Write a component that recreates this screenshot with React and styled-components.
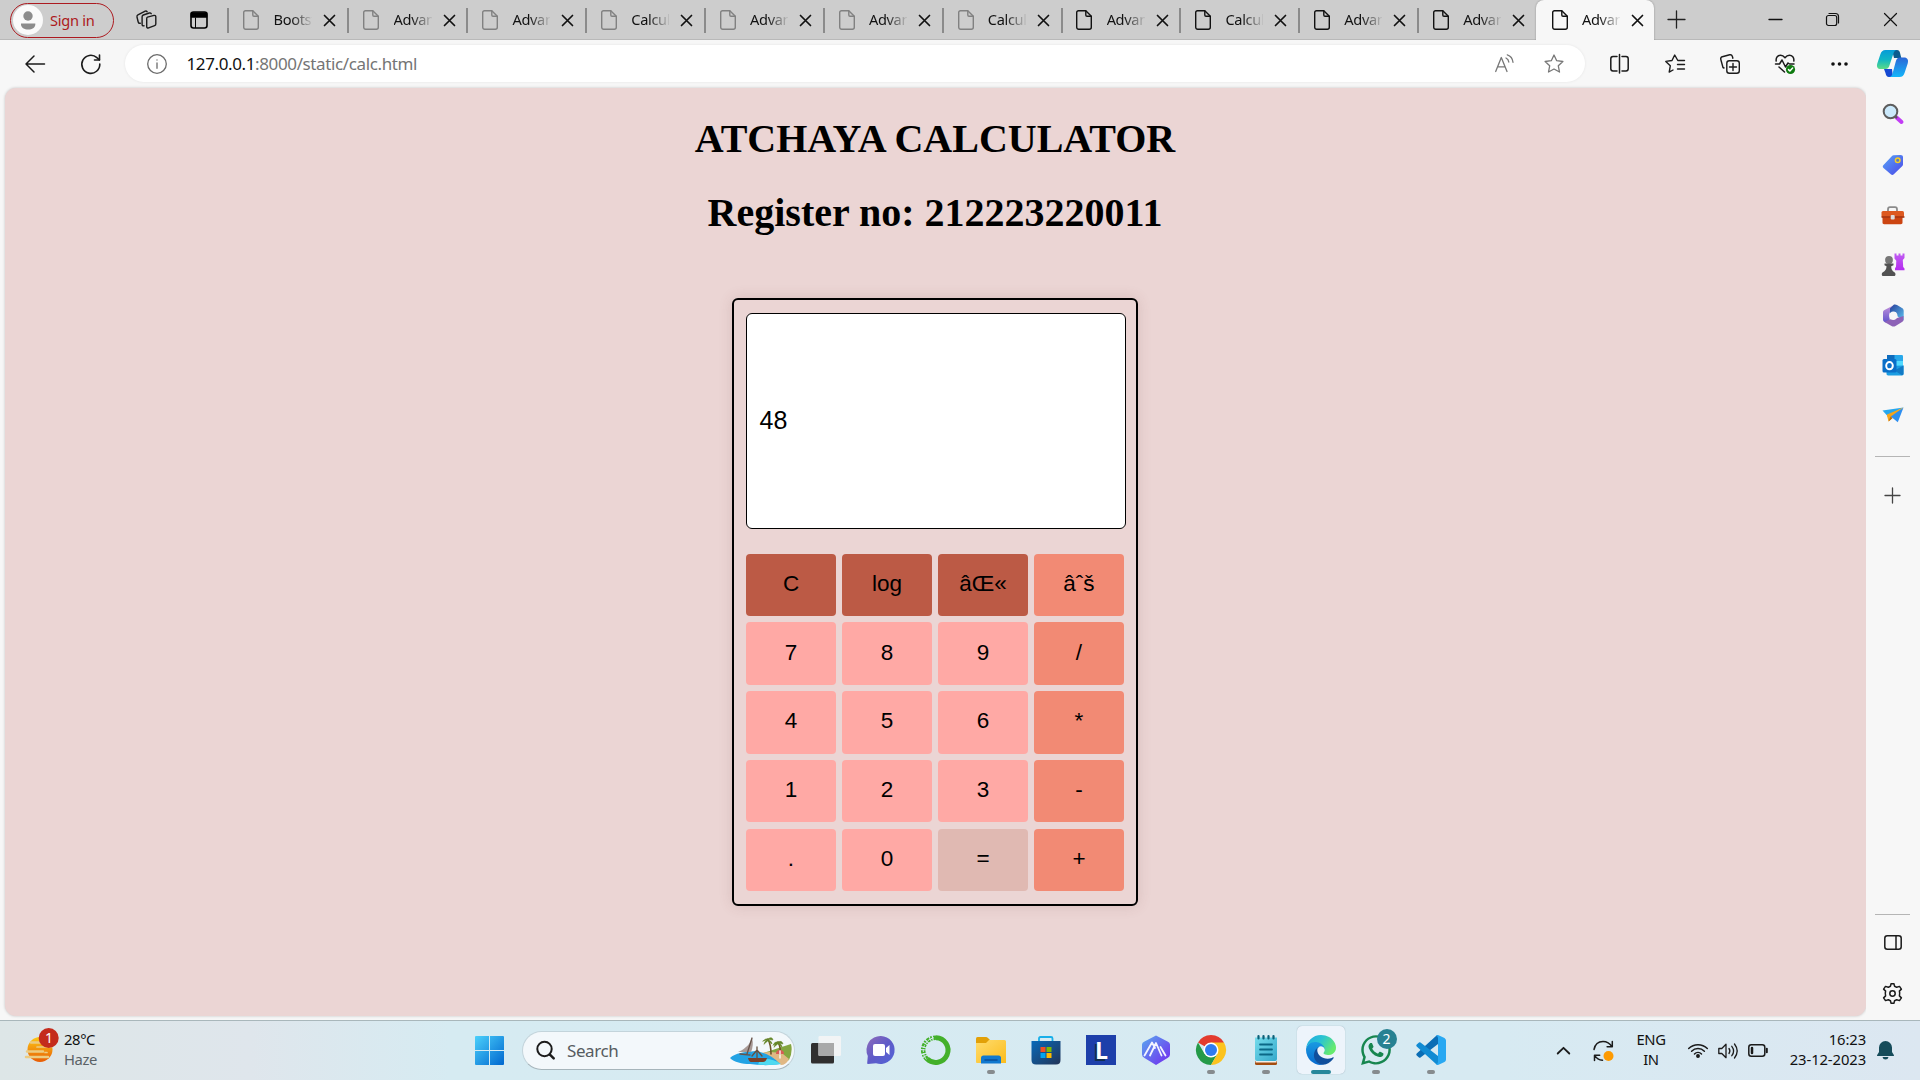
import React from "react";
import styled, { createGlobalStyle } from "styled-components";
import { FaWhatsapp } from "react-icons/fa";

const GlobalStyle = createGlobalStyle`
  * { box-sizing: border-box; }
  body { margin: 0; overflow: hidden; background: #f7f7f7; }
  svg { display: block; flex: none; overflow: visible; }
  button { border: 0; padding: 0; background: none; font: inherit; color: inherit; }
`;

const Screen = styled.div`
  width: 1920px;
  height: 1080px;
  display: flex;
  flex-direction: column;
  font-family: "Noto Sans", "Open Sans", sans-serif;
  color: #111;
`;

/* ---------- tab strip ---------- */

const TabStrip = styled.header`
  height: 40px;
  display: flex;
  background: #cdcdcd;
  box-shadow: inset 0 -1px 0 #b9b9b9;
`;

const StripStart = styled.div`
  width: 227.2px;
  display: flex;
  align-items: center;
  padding-left: 10px;
`;

const SignIn = styled.button`
  width: 104px;
  height: 35px;
  display: flex;
  align-items: center;
  gap: 7px;
  padding-left: 2px;
  border: 1px solid #ac1a20;
  border-radius: 18px;
  color: #ac1a20;
  font-size: 14.6px;
  letter-spacing: -0.25px;
  white-space: nowrap;
`;

const StripIcon = styled.div`
  display: flex;
  margin-left: ${(p) => p.$gap}px;
`;

const Tab = styled.div`
  width: ${(p) => p.$w}px;
  height: 40px;
  flex: none;
  display: flex;
  align-items: center;
  background: ${(p) => (p.$active ? "#f7f7f7" : "transparent")};
  border-radius: 8px 8px 0 0;
  z-index: ${(p) => (p.$active ? 1 : 0)};
  box-shadow: ${(p) => (p.$active ? "0 0 2px rgba(0,0,0,.35)" : "none")};
  clip-path: ${(p) => (p.$active ? "inset(0 -3px 0 -3px)" : "none")};
`;

const TabDivider = styled.span`
  width: 2px;
  height: 25px;
  background: ${(p) => (p.$hidden ? "transparent" : "#8b8b8b")};
  margin: 1px 13.8px 0 0.3px;
`;

const TabTitle = styled.span`
  width: 38px;
  margin: 0 12px 2px 14.3px;
  overflow: hidden;
  white-space: nowrap;
  font-size: 14.6px;
  line-height: 22px;
  letter-spacing: -0.35px;
  mask-image: linear-gradient(90deg, #000 45%, transparent 104%);
`;

const WindowControls = styled.div`
  display: flex;
  align-items: center;
  padding: 0 0 1px 14px;
`;

const ControlSlot = styled.div`
  width: ${(p) => p.$w}px;
  margin-left: ${(p) => p.$ml || 0}px;
  display: flex;
  justify-content: center;
`;

/* ---------- toolbar ---------- */

const Toolbar = styled.div`
  height: 48px;
  display: flex;
  align-items: center;
  padding-bottom: 1px;
  background: #f7f7f7;
`;

const ToolSlot = styled.div`
  width: ${(p) => p.$w || 55}px;
  display: flex;
  justify-content: center;
`;

const AddressBar = styled.div`
  width: 1460px;
  height: 37px;
  margin: 0 7px 0 14px;
  display: flex;
  align-items: center;
  padding: 0 6px 0 22px;
  background: #fff;
  border-radius: 19px;
  box-shadow: 0 0 3px rgba(0, 0, 0, 0.08);
`;

const Url = styled.span`
  flex: 1;
  padding-left: 19.5px;
  font-size: 17px;
  line-height: 24px;
  letter-spacing: -0.38px;
  color: #757575;
  b { font-weight: 400; color: #111; }
`;

/* ---------- body ---------- */

const Middle = styled.div`
  height: 932px;
  display: flex;
  padding: 0 0 4px 5px;
`;

const Page = styled.main`
  width: 1861px;
  height: 928px;
  display: flex;
  flex-direction: column;
  align-items: center;
  padding-right: 1px;
  background: #ebd5d4;
  border-radius: 11px;
  box-shadow: 0 0 3px rgba(0, 0, 0, 0.22);
`;

const Heading = styled.h1`
  margin: ${(p) => p.$top}px 0 0;
  font: bold 40px/46px "Liberation Serif", "Times New Roman", serif;
  color: #000;
`;

const Calculator = styled.section`
  width: 406px;
  height: 608px;
  margin-top: 62px;
  padding: 12.5px 10px 12px 12px;
  border: 2px solid #000;
  border-radius: 6px;
  box-shadow: 0 0 14px rgba(120, 60, 60, 0.16);
`;

const Display = styled.div`
  width: 380px;
  height: 216px;
  display: flex;
  align-items: center;
  padding: 0 0 2px 12.5px;
  background: #fff;
  border: 1px solid #000;
  border-radius: 6px;
  font: 25px/30px "Liberation Sans", Arial, sans-serif;
  color: #000;
`;

const Keypad = styled.div`
  display: grid;
  grid-template-columns: repeat(4, 90px);
  grid-auto-rows: 62.5px;
  gap: 6.25px 6px;
  margin-top: 25px;
`;

const keyColors = { top: "#bc5a45", op: "#f28a74", num: "#ffa9a5", eq: "#e0b9b2" };

const Key = styled.button`
  padding-bottom: 2px;
  background: ${(p) => keyColors[p.$kind]};
  border-radius: 4px;
  font: 22.5px/28px "Liberation Sans", Arial, sans-serif;
  color: #000;
`;

/* ---------- sidebar ---------- */

const Sidebar = styled.aside`
  width: 53px;
  display: flex;
  flex-direction: column;
  align-items: center;
  background: #f7f7f7;
`;

const SideSlot = styled.div`
  height: ${(p) => p.$h || 50}px;
  display: flex;
  align-items: center;
`;

const SideRule = styled.hr`
  width: 35px;
  height: 1px;
  margin: 0;
  border: 0;
  background: #b5b5b5;
`;

const Spacer = styled.div`
  flex: 1;
`;

/* ---------- taskbar ---------- */

const Taskbar = styled.footer`
  height: 60px;
  display: flex;
  align-items: center;
  border-top: 1px solid #a9b7bb;
  background: linear-gradient(90deg, #dde6e7 0, #dfe6ec 250px, #d6ebf2 450px, #d7eaf2 1500px, #dce7f1 1920px);
`;

const Weather = styled.div`
  width: 461px;
  display: flex;
  align-items: center;
  padding-left: 24px;
`;

const Stack = styled.div`
  display: flex;
  flex-direction: column;
  align-items: ${(p) => p.$align || "flex-start"};
  padding-bottom: 4px;
  font-size: 14.8px;
  line-height: 20px;
  letter-spacing: ${(p) => p.$track || -0.4}px;
  white-space: nowrap;
`;

const Muted = styled.span`
  color: #5a6266;
`;

const WeatherIcon = styled.div`
  width: 40px;
  display: flex;
  padding-bottom: 9px;
`;

const SearchBox = styled.div`
  width: 273px;
  height: 39px;
  margin: 0 3px 0 5px;
  display: flex;
  align-items: center;
  padding: 0 2px 0 12.5px;
  background: #f3f8fb;
  border: 1px solid #c3d4db;
  border-bottom-color: #a6b5bb;
  border-radius: 20px;
  font-size: 17px;
  letter-spacing: -0.4px;
  color: #565c60;
`;

const SearchLabel = styled.span`
  flex: 1;
  padding: 0 0 1px 12.5px;
`;

const AppSlot = styled.div`
  width: ${(p) => p.$w || 55}px;
  height: 59px;
  display: flex;
  flex-direction: column;
  align-items: center;
`;

const AppTile = styled.div`
  width: 48px;
  height: 48px;
  margin-top: 5px;
  display: flex;
  flex-direction: column;
  align-items: center;
  padding-top: 9px;
  border-radius: 5px;
  background: ${(p) => (p.$active ? "#edf4fb" : "transparent")};
  box-shadow: ${(p) => (p.$active ? "0 0 1px rgba(60,90,110,.5)" : "none")};
`;

const Indicator = styled.span`
  width: ${(p) => (p.$active ? 20 : 8)}px;
  height: 4px;
  margin-top: 5px;
  border-radius: 2px;
  background: ${(p) => (p.$active ? "#27879a" : "#868b8e")};
`;

const Tray = styled.div`
  display: flex;
  align-items: center;
  margin-left: 85px;
`;

const TraySlot = styled.div`
  width: ${(p) => p.$w}px;
  display: flex;
  justify-content: ${(p) => (p.$end ? "flex-end" : "center")};
`;

/* ---------- drawings ---------- */

const Icon = ({ w = 20, h = w, box, sw = 1.3, color = "#1b1b1b", fill = "none", children }) => (
  <svg
    width={w}
    height={h}
    viewBox={box || `0 0 ${w} ${h}`}
    fill={fill}
    stroke={color}
    strokeWidth={sw}
    strokeLinecap="round"
    strokeLinejoin="round"
  >
    {children}
  </svg>
);

const Avatar = () => (
  <Icon w={30} color="none">
    <circle cx="15" cy="15" r="15" fill="#fafafa" />
    <circle cx="15" cy="11" r="4.7" fill="#8c8c8c" />
    <path d="M8 18.5h14.3v1c0 3-3.2 5-7.1 5s-7.2-2-7.2-5z" fill="#8c8c8c" />
  </Icon>
);

const Workspaces = () => (
  <Icon w={21} h={20} sw={1.4}>
    <path d="M11.5 7.2 18 5.4c1-.2 1.8.3 1.8 1.300v7.400c0 .8-.4 1.300-1.200 1.500l-6 2.300c-1 .4-1.900-.1-1.900-1.100V8.700c0-.8.200-1.300.8-1.500z" />
    <path d="M8 15.800c-1.200.2-1.900-.3-1.900-1.300V6.800c0-.9.4-1.500 1.200-1.800l6-2c.9-.3 1.500 0 1.900.7" />
    <path d="M4.300 13.300c-1.200.2-1.900-.5-2.100-1.300L1 7c-.2-.9.1-1.700.9-2.100L9.200 1.200c.8-.3 1.500 0 1.900.5" />
  </Icon>
);

const TabActions = () => (
  <Icon w={18} sw={1.6} color="#000">
    <rect x="1" y="1" width="16" height="16" rx="2.500" />
    <path d="M1.500 2h15v4h-15z" fill="#000" />
    <path d="M5.500 7v9.500" strokeWidth="1" />
  </Icon>
);

const FileIcon = ({ dim }) => (
  <Icon w={16} h={20} color={dim ? "#818181" : "#111"} sw={1.4}>
    <path d="M2.500.7h7.300L15.300 6.200v11.100a2 2 0 0 1-2 2H2.700a2 2 0 0 1-2-2V2.600C.7 1.500 1.400.7 2.500.7z" />
    <path d="M9.800.9v4.200c0 .8.400 1.200 1.200 1.200h4.200" />
  </Icon>
);

const Cross = ({ s = 11, sw = 1.7 }) => (
  <Icon w={s} sw={sw} color="#111">
    <path d={`M.5.5 ${s - 0.5} ${s - 0.5}M${s - 0.5}.5.5 ${s - 0.5}`} />
  </Icon>
);

const Plus = ({ s = 17, sw = 1.3, color = "#222" }) => (
  <Icon w={s} sw={sw} color={color}>
    <path d={`M${s / 2} 0v${s}M0 ${s / 2}h${s}`} />
  </Icon>
);

const Minimize = () => (
  <Icon w={13} h={1} color="#111">
    <path d="M0 .5h13" />
  </Icon>
);

const Restore = () => (
  <Icon w={13} color="#111" sw={1.200}>
    <rect x=".5" y="2.500" width="10.200" height="10" rx="2" />
    <path d="M3 .5h6.500q3 0 3 3V10" />
  </Icon>
);

const Back = () => (
  <Icon w={20} sw={1.5}>
    <path d="M19.500 10H1M9 2 1 10l8 8" />
  </Icon>
);

const Refresh = () => (
  <Icon w={20} sw={1.600}>
    <path d="M18.800 10A9 9 0 1 1 15.900 3.700l2.500 2.200" />
    <path d="M18.500 1v5h-5" />
  </Icon>
);

const Info = () => (
  <Icon w={20} color="#6b6b6b" sw={1.300}>
    <circle cx="10" cy="10" r="9.300" />
    <path d="M10 9v5.300M10 5.900v.2" />
  </Icon>
);

const ReadAloud = () => (
  <Icon w={19} color="#777" sw={1.300}>
    <path d="M.7 17.500 6.300 3.500l5.700 14M2.600 12.800h7.600" />
    <path d="M11 4c1.600.8 2.600 2.200 2.800 4M12.300.8c3.200 1 5.300 3.700 5.700 7.500" />
  </Icon>
);

const Star = () => (
  <Icon w={20} color="#777" sw={1.300}>
    <path d="M10 1l2.700 5.700 6.200.8-4.600 4.300 1.200 6.200L10 15l-5.500 3 1.200-6.200L1.100 7.500l6.200-.8z" />
  </Icon>
);

const SplitScreen = () => (
  <Icon w={19} h={20} sw={1.500}>
    <path d="M7 2.500H3A2.300 2.300 0 0 0 .8 4.800v10A2.300 2.300 0 0 0 3 17h4M12 2.500h4a2.300 2.300 0 0 1 2.200 2.300v10A2.300 2.300 0 0 1 16 17h-4M9.500.5v18.500" />
  </Icon>
);

const Favorites = () => (
  <Icon w={20} sw={1.400}>
    <path d="M19.500 6.500h-6.700L9.700 1 7 6.500l-6.200.9 4.500 4.400-1.100 6.300L8 16M12.500 10.500h7M12.500 15h7" />
  </Icon>
);

const Collections = () => (
  <Icon w={20} sw={1.400}>
    <rect x="6.800" y="6.800" width="12.500" height="12.500" rx="2.500" />
    <path d="M13 9.500v7M9.500 13h7M4 14 3 13.500.8 5.500C.4 4 1 3.200 2.300 2.700L9.700.8c1.300-.3 2.200.2 2.600 1.400l.6 2" />
  </Icon>
);

const Health = () => (
  <Icon w={20} sw={1.500}>
    <path d="M1.200 7C.6 3.500 3 1.300 5.600 1.300c2 0 3.200 1 4.400 2.500 1.200-1.500 2.400-2.500 4.400-2.500 2.600 0 5 2.200 4.400 5.700M.5 10h4L7 6l3.500 7L13 9l1.500 1H19M4 13l5.500 5" />
    <circle cx="15.500" cy="15.500" r="4.600" fill="#0f7b10" stroke="none" />
    <path d="M13.500 15.600l1.400 1.400 2.700-2.900" stroke="#fff" />
  </Icon>
);

const Dots = () => (
  <Icon w={17} h={4} color="none" fill="#111">
    <circle cx="2" cy="2" r="1.800" />
    <circle cx="8.500" cy="2" r="1.800" />
    <circle cx="15" cy="2" r="1.800" />
  </Icon>
);

const Copilot = () => (
  <Icon w={31} h={27} color="none">
    <defs>
      <linearGradient id="cpA" x1="0" y1="0" x2="0" y2="1">
        <stop offset="0" stopColor="#069bd8" />
        <stop offset=".5" stopColor="#10b5c5" />
        <stop offset="1" stopColor="#5bdc86" />
      </linearGradient>
      <linearGradient id="cpB" x1="0" y1="0" x2="0" y2="1">
        <stop offset="0" stopColor="#2b66d6" />
        <stop offset="1" stopColor="#14b6fa" />
      </linearGradient>
    </defs>
    <path d="M15 0h5c2 0 2.800 1.500 3.300 4l1 4H17z" fill="#0b5c8f" />
    <path d="M7 19h8L16 27h-4c-2 0-3-1.500-3.500-4z" fill="#1549d2" />
    <path d="M8.500 0H20c-2 0-3 1.500-3.700 4l-3.700 11c-.8 2.600-1.700 4-4 4H4c-3.500 0-4.700-2-3.700-5.500l3-9C4.200 1.500 5.700 0 8.500 0z" fill="url(#cpA)" />
    <path d="M22.500 27H12c2 0 3-1.500 3.700-4l3-11.300c.8-2.800 2-4.200 4.300-4.200h4c3.500 0 4.700 2.500 3.700 6l-3 9C26.800 25.500 25.300 27 22.500 27z" fill="url(#cpB)" />
  </Icon>
);

const SearchTool = () => (
  <Icon w={22} color="none">
    <path d="m14 14 5.500 5" stroke="#c23cf5" strokeWidth="4" />
    <path d="m12 12 2.500 2.500" stroke="#555" strokeWidth="2" />
    <circle cx="8.500" cy="8.500" r="6.800" fill="#cbe9fb" stroke="#5d5d5d" strokeWidth="2" />
  </Icon>
);

const TagTool = () => (
  <Icon w={22} color="none">
    <defs>
      <linearGradient id="tg" x1="0" y1="0" x2="1" y2="1">
        <stop offset="0" stopColor="#57a5f6" />
        <stop offset="1" stopColor="#4b46e8" />
      </linearGradient>
    </defs>
    <path d="M11.500 1.200 18.500 1c1.700 0 2.500.8 2.500 2.300V10c0 1-.2 1.500-.9 2.200l-8.300 8.100c-1 .9-2 .9-3 0L1.500 14c-1-1-1-2 0-3L10 2c.4-.5.900-.8 1.500-.8z" fill="url(#tg)" />
    <circle cx="15.700" cy="6.200" r="2.300" fill="#5a7cc0" stroke="#f7cd24" strokeWidth="1.500" />
  </Icon>
);

const ToolboxTool = () => (
  <Icon w={23} h={19} color="none">
    <path d="M7 6V3.500C7 2 7.800 1.200 9 1.200h5c1.200 0 2 .8 2 2.300V6" stroke="#8b8b8b" strokeWidth="1.800" />
    <path d="M1.500 9h20v7.500c0 1-.6 1.700-1.700 1.700H3.200c-1.100 0-1.700-.7-1.700-1.700z" fill="#cc4512" />
    <rect x=".5" y="5" width="22.500" height="6.500" rx="1.500" fill="#dd5920" />
    <path d="M1 11h22" stroke="#a23310" />
    <rect x="9.700" y="9" width="4" height="4.500" rx="1" fill="#ddd" />
  </Icon>
);

const ChessTool = () => (
  <Icon w={24} color="none">
    <defs>
      <linearGradient id="rk" x1="0" y1="0" x2="0" y2="1">
        <stop offset="0" stopColor="#c05df2" />
        <stop offset="1" stopColor="#b52cf0" />
      </linearGradient>
    </defs>
    <path d="M13.500.5h2v2h2v-2h2v2h2v-2h2V5l-1.700 2 .4 7 1.300 1.500v1.800H14v-2l1-1.500.3-6L13.500 5.500z" fill="url(#rk)" />
    <circle cx="8" cy="7" r="3.900" fill="#777" />
    <path d="M3.500 10.500h9v1.800l-2.300 1c0 3 .8 4.500 3.500 6.200 1 .7 1.200 3 0 3.500H1.500c-1-.6-.9-2.800 0-3.500 3-1.700 4-3.200 4-6.200l-2-1z" fill="#525252" />
  </Icon>
);

const Office = () => (
  <Icon w={22} h={23} color="none">
    <defs>
      <linearGradient id="ofA" x1="0" y1="0" x2="0" y2="1">
        <stop offset="0" stopColor="#c795db" />
        <stop offset="1" stopColor="#5a4fcc" />
      </linearGradient>
      <linearGradient id="ofB" x1="0" y1="0" x2="1" y2="1">
        <stop offset="0" stopColor="#253d99" />
        <stop offset="1" stopColor="#5ec5f1" />
      </linearGradient>
    </defs>
    <path d="M12.500.8 2.500 6C1.300 6.700 1 7.500 1 8.500v7c0 1.200.6 2 1.600 2.500l5 1.500V9z" fill="url(#ofA)" />
    <path d="M8 4.500 12 .6c1-.4 2-.2 3 .4l5 3c1.200.7 1.700 1.700 1.700 3v9.500L15 12 14 8l-6 2z" fill="url(#ofB)" />
    <path d="M7.500 15.500 15 14l6.500-2v3.500c0 1.200-.5 2-1.500 2.600l-6.500 3.800c-1.300.7-2.700.7-4 0L2.500 18z" fill="#8d62b7" />
    <circle cx="11.300" cy="11.700" r="4.200" fill="#f7f7f7" />
  </Icon>
);

const Outlook = () => (
  <Icon w={22} color="none">
    <rect x="5" y="1" width="16" height="12" rx="1.300" fill="#28a8ea" />
    <path d="M5 1h7.500v6H5z" fill="#0f6cbd" />
    <path d="M13 7h8v6h-8z" fill="#50d9ff" />
    <path d="M4.500 12 21.500 11.500v8.300c0 1-.6 1.700-1.700 1.700H6.200c-1.100 0-1.700-.7-1.700-1.700z" fill="#1b9de2" />
    <path d="m21.500 11.500-9 5 7.500 4.800c1-.2 1.500-.7 1.500-1.500z" fill="#127ac5" />
    <rect x=".5" y="5" width="14" height="13.500" rx="1.500" fill="#0a6fc8" />
    <ellipse cx="7.500" cy="11.700" rx="3.300" ry="3.600" stroke="#fff" strokeWidth="2" />
  </Icon>
);

const PlaneTool = () => (
  <Icon w={22} h={16} color="none">
    <path d="M.5 3.500 21.500.5 5.500 9z" fill="#27a7ee" />
    <path d="M21.500.5 5 8.500l1.500 6z" fill="#f7a51c" />
    <path d="m6.500 14.500 2-5 2 1.800z" fill="#b96b0b" />
    <path d="M21.500.5 8.800 9.500l7 5.800z" fill="#2e8ff0" />
    <path d="M21.500.5 5 7.500v2.300z" fill="#f7a51c" />
  </Icon>
);

const PanelIcon = () => (
  <Icon w={18} h={15} sw={1.500}>
    <rect x=".8" y=".8" width="16.400" height="13.400" rx="2.500" />
    <path d="M12 1v13" />
  </Icon>
);

const Gear = () => (
  <Icon w={21} sw={1.500}>
    <path d="M8.500 3.200 9 .8h3l.5 2.400c.9.3 1.500.6 2.200 1.100l2.800-.9 1.900 2.700-2 2c.3.900.3 3.300 0 4.800l2 2-1.900 2.700-2.800-.9c-.7.5-1.300.8-2.200 1.100l-.5 2.400H9l-.5-2.400c-.9-.3-1.500-.6-2.200-1.100l-2.800.9-1.900-2.700 2-2c-.3-1.500-.3-3.900 0-4.800l-2-2 1.900-2.700 2.800.9c.7-.5 1.300-.8 2.200-1.100z" />
    <circle cx="10.500" cy="10.500" r="2.700" />
  </Icon>
);

const WeatherArt = () => (
  <Icon w={36} h={36} color="none">
    <defs>
      <linearGradient id="sun" x1="0" y1="0" x2="0" y2="1">
        <stop offset="0" stopColor="#fcc917" />
        <stop offset="1" stopColor="#e85c05" />
      </linearGradient>
    </defs>
    <circle cx="16" cy="21.500" r="12.500" fill="url(#sun)" />
    <path d="M7 14.500h9M3 23.500h16M2 29h22" stroke="#eccb81" strokeWidth="2.500" />
    <path d="M13 19h14M21 24.500h2" stroke="#eccb81" strokeWidth="1.700" />
    <circle cx="24.700" cy="10" r="10" fill="#c42b1c" />
    <text x="25" y="15" textAnchor="middle" fontSize="14" fill="#fff" fontFamily="Noto Sans, sans-serif">1</text>
  </Icon>
);

const StartLogo = () => (
  <Icon w={29} color="none">
    <defs>
      <linearGradient id="win" gradientUnits="userSpaceOnUse" x1="0" y1="0" x2="29" y2="29">
        <stop offset="0" stopColor="#4bd0fb" />
        <stop offset="1" stopColor="#0067cf" />
      </linearGradient>
    </defs>
    <path d="M1 0h13v14H0V1q0-1 1-1zM15 0h13q1 0 1 1v13H15zM0 15h14v14H1q-1 0-1-1zM15 15h14v13q0 1-1 1H15z" fill="url(#win)" />
  </Icon>
);

const SearchGlass = () => (
  <Icon w={19} sw={2} color="#1c1c1c">
    <circle cx="8.500" cy="8" r="7.200" />
    <path d="m13.700 13.300 4 4" strokeWidth="2.500" />
  </Icon>
);

const Beach = () => (
  <Icon w={62} h={30} color="none">
    <path d="M30 18c7-2 13-4 17-5.500L61 8q2 8-2 16l-8 4-14-4z" fill="#84a640" />
    <path d="M31 17c8-2 15-1 22 1l6 5q-3 6-8 6-8-7-20-8z" fill="#e0b884" />
    <path d="M0 22c5-5 15-6 25-7 8 1 18 5 25 13-9 1.500-20 1.500-30 0C12 28 4 26 0 22z" fill="#23a3e4" />
    <path d="M30 24q10-3 21 4-10 1.500-23 .5z" fill="#4fdaf0" />
    <path d="M8 16q7-3 11-8l3-6q2 7-1 14z" fill="#a89a96" />
    <path d="m22 2-5 16M10 18l10 1" stroke="#68534a" />
    <path d="M18 22h19q-1 4-4 4H21q-2 0-3-4z" fill="#7a4029" />
    <path d="M27 22V11m-5 9 5-6 5 6" stroke="#67503d" />
    <path d="M41 18q0-9-3-15M50 18q1-7-2-12" stroke="#6d5326" strokeWidth="1.600" />
    <path d="M33 5q3-3 5-2 4-3 5 1-4-1-5 0-2 0-5 1zM34 8q1-4 4-4 4 1 4 4l-4-3zM43 9q2-4 5-3 4-2 5 2l-5-1zM44 11q1-4 4-4 4 1 4 4l-4-3z" fill="#5d8a2c" stroke="#6b8526" strokeWidth=".6" />
    <path d="M46 18a4 4 0 0 1 8 0z" fill="#d85c55" />
    <path d="M50 15v7" stroke="#fff" />
  </Icon>
);

const TaskView = () => (
  <Icon w={30} color="none">
    <rect x="0" y="8" width="23" height="20.500" rx="1.500" fill="#302f2f" />
    <rect x="7.500" y="1" width="22.500" height="20" rx="1.200" fill="#f2f4f5" />
    <path d="M7.500 8H23v13H8.500q-1 0-1-1z" fill="#a9a9a9" />
  </Icon>
);

const ChatApp = () => (
  <Icon w={30} color="none">
    <defs>
      <linearGradient id="chat" x1="0" y1="0" x2="1" y2="1">
        <stop offset="0" stopColor="#906bb8" />
        <stop offset=".5" stopColor="#5f5bc8" />
        <stop offset="1" stopColor="#5264d8" />
      </linearGradient>
    </defs>
    <path d="M15 1a14 14 0 1 1-5 27.200L2 29q-1 0-.8-1l.6-7A14 14 0 0 1 15 1z" fill="url(#chat)" />
    <rect x="7" y="9" width="12" height="12" rx="2" fill="#fff" />
    <path d="m20 13 3.500-3v10L20 17z" fill="#fff" />
  </Icon>
);

const Anaconda = () => (
  <Icon w={30} color="#43b02a">
    <path d="M15 2.800a12.300 12.300 0 1 1-9 21" strokeWidth="5" strokeLinecap="butt" />
    <path d="M6 24A12.300 12.300 0 0 1 15 2.800" strokeWidth="4.500" strokeLinecap="butt" strokeDasharray="3 1 1.500 1.200" />
    <path d="M5 24A13.500 13.500 0 0 1 14 2.500" stroke="#d7eaf2" strokeWidth="1" strokeDasharray="2 2" />
  </Icon>
);

const Explorer = () => (
  <Icon w={30} color="none">
    <defs>
      <linearGradient id="fld" x1="0" y1="0" x2="1" y2="1">
        <stop offset="0" stopColor="#ffdc6e" />
        <stop offset="1" stopColor="#fbbc1c" />
      </linearGradient>
    </defs>
    <path d="M0 3.500Q0 2 1.500 2H10q1 0 2 1l2 2v5H0z" fill="#e2a008" />
    <path d="M0 8h10l3-3h15.500Q30 5 30 6.500V28H1q-1 0-1-1z" fill="url(#fld)" />
    <path d="M5 28.500V23q0-2.500 2.500-2.500h15q2.500 0 2.500 2.500v5.500z" fill="#1079cf" />
    <path d="M9 25h12" stroke="#084f9b" strokeWidth="1.500" />
  </Icon>
);

const Store = () => (
  <Icon w={30} color="none">
    <defs>
      <linearGradient id="str" x1="0" y1="0" x2="1" y2="1">
        <stop offset="0" stopColor="#0769b9" />
        <stop offset="1" stopColor="#243558" />
      </linearGradient>
    </defs>
    <path d="M8 7V3.500Q8 2 9.500 2h10.500q1.500 0 1.500 1.500V7" stroke="#18afe9" strokeWidth="1.800" />
    <path d="M.5 6h29v19q0 4.500-4.500 4.500H5Q.5 29.500.5 25z" fill="url(#str)" />
    <path d="M9.500 12h5v5h-5z" fill="#f25022" />
    <path d="M15.500 12h5v5h-5z" fill="#7fba00" />
    <path d="M9.500 18h5v5h-5z" fill="#00a4ef" />
    <path d="M15.500 18h5v5h-5z" fill="#ffb900" />
  </Icon>
);

const LTile = styled.div`
  width: 30px;
  height: 30px;
  background: #1d3faa;
  color: #fff;
  text-shadow: -2px 2px 0 #112d50;
  font: bold 23px/30px "Open Sans", sans-serif;
  text-align: center;
  padding-left: 2px;
`;

const HexApp = () => (
  <Icon w={30} color="none">
    <defs>
      <linearGradient id="hex" x1="0" y1="0" x2="1" y2="1">
        <stop offset="0" stopColor="#59a9ef" />
        <stop offset="1" stopColor="#7228ef" />
      </linearGradient>
    </defs>
    <path d="m15 .5 11.500 6Q29 7.500 29 9.500v10q0 2-2.500 3.500L15 30 3.500 23Q1 21.500 1 19.500v-10q0-2 2.500-3z" fill="url(#hex)" />
    <path d="m3.500 20.500 7.500-13 3 5.500M9 20.500l6-12.500 5.500 12.500M19.500 12l5 8.500" stroke="#f3f4ff" strokeWidth="1.800" />
  </Icon>
);

const Chrome = () => (
  <Icon w={30} color="none">
    <path d="M15 15 2 7.500a15 15 0 0 1 26 0z" fill="#e33b2e" />
    <path d="M2 7.500A15 15 0 0 0 15 30l6.500-11.300L15 15l-6.500 3.700z" fill="#249a48" />
    <path d="M28 7.500H15L21.500 18.700 15 30A15 15 0 0 0 28 7.500z" fill="#fcc31e" />
    <circle cx="15" cy="15" r="7.500" fill="#fff" />
    <circle cx="15" cy="15" r="6" fill="#2f7bf0" />
  </Icon>
);

const Notepad = () => (
  <Icon w={30} color="none">
    <defs>
      <linearGradient id="nte" x1="0" y1="0" x2="1" y2="1">
        <stop offset="0" stopColor="#76dcec" />
        <stop offset="1" stopColor="#34a9cb" />
      </linearGradient>
    </defs>
    <path d="M4 26h22v2.500q0 1.500-1.500 1.500h-19Q4 30 4 28.500z" fill="#a34d10" />
    <path d="M4.500 26h21v1.500h-21z" fill="#f3eee8" />
    <path d="M4 2.500h22V24q0 2-2 2H6q-2 0-2-2z" fill="url(#nte)" />
    <path d="M9 9.500h12M9 14.500h12M9 19.500h12" stroke="#0b6887" strokeWidth="1.800" />
    <path d="M7.500 1v2.500M12.500 1v2.500M17.500 1v2.500M22.500 1v2.500" stroke="#0b6078" strokeWidth="2.200" />
  </Icon>
);

const Edge = () => (
  <Icon w={30} box="4.600 4.900 256 256" color="none">
    <defs>
      <linearGradient id="edA" x1="0" y1="0" x2="1" y2=".5">
        <stop offset="0" stopColor="#1da9e2" />
        <stop offset=".5" stopColor="#2bc3d2" />
        <stop offset="1" stopColor="#66eb6e" />
      </linearGradient>
      <linearGradient id="edB" x1="0" y1="0" x2="0" y2="1">
        <stop offset="0" stopColor="#1b9de2" />
        <stop offset="1" stopColor="#0669ce" />
      </linearGradient>
    </defs>
    <path d="M235.680 195.460a93.730 93.730 0 0 1-10.540 4.710 101.870 101.870 0 0 1-35.900 6.460c-47.320 0-88.540-32.550-88.540-74.320A31.480 31.480 0 0 1 117.130 105c-42.800 1.800-53.800 46.400-53.800 72.530 0 73.880 68.090 81.370 82.760 81.370 7.910 0 19.840-2.300 27-4.560l1.310-.440a128.340 128.340 0 0 0 66.600-52.800 4 4 0 0 0-5.320-5.640z" fill="#104f9c" />
    <path d="M110.340 246.340A79.200 79.200 0 0 1 87.600 225a80.720 80.720 0 0 1 29.530-120c3.120-1.470 8.450-4.130 15.540-4a32.350 32.350 0 0 1 25.690 13 31.880 31.880 0 0 1 6.360 18.660c0-.210 24.460-79.600-80-79.600-43.900 0-80 41.660-80 78.210a130.150 130.150 0 0 0 12.110 56 128 128 0 0 0 156.380 67.110 75.550 75.550 0 0 1-62.780-8z" fill="url(#edB)" />
    <path d="M156.940 153.780c-.810 1.050-3.300 2.500-3.300 5.660 0 2.610 1.700 5.120 4.720 7.230 14.380 10 41.490 8.680 41.560 8.680a59.560 59.560 0 0 0 30.270-8.350 61.380 61.380 0 0 0 30.430-52.880c.260-22.410-8-37.310-11.340-43.910-21.190-41.450-66.930-65.290-116.670-65.290a128 128 0 0 0-128 126.200c.480-36.540 36.800-66.050 80-66.050 3.500 0 23.460.340 42 10.070 16.340 8.580 24.900 18.940 30.850 29.210 6.180 10.670 7.280 24.150 7.280 29.520s-2.740 13.330-7.800 19.910z" fill="url(#edA)" />
  </Icon>
);

const WhatsappWrap = styled.div`
  position: relative;
  width: 30px;
  height: 30px;
  color: #17864f;
  svg { margin: -2px; }
`;

const Badge = styled.span`
  position: absolute;
  left: 16px;
  top: -6px;
  width: 20px;
  height: 20px;
  border-radius: 50%;
  background: #278192;
  color: #fff;
  font-size: 14px;
  line-height: 20px;
  text-align: center;
`;

const Whatsapp = () => (
  <WhatsappWrap>
    <FaWhatsapp size={34} />
    <Badge>2</Badge>
  </WhatsappWrap>
);

const VsCode = () => (
  <Icon w={30} color="none">
    <path d="M22 0v9L4.500 22.500q-.8.500-1.500 0L.7 20.500q-1-1 0-2L20 1q1-1 2-1z" fill="#0b6db5" />
    <path d="M22 30v-9L4.500 7.500Q3.700 7 3 7.500L.7 9.500q-1 1 0 2L20 29q1 1 2 1z" fill="#118bd3" />
    <path d="M22 0l6.500 3Q30 4 30 5.500v19q0 1.500-1.500 2.500L22 30q-1 .3-2-1 2 0 2-2V3q0-2-2-2 1-1.300 2-1z" fill="#28a8f2" />
  </Icon>
);

const Chevron = () => (
  <Icon w={13} h={7} sw={1.800}>
    <path d="M.7 6.500 6.500.8l5.800 5.700" />
  </Icon>
);

const Sync = () => (
  <Icon w={21} h={22} sw={1.500}>
    <path d="M1 9.500C2 4.500 5.500 1.500 10 1.500c4 0 7 2 9 5.300M19.300 1.500v5.300h-5.200M1.500 20.500v-5.300h5.200M1.800 15.500c1.700 3 4.200 4.500 7.700 4.700" />
    <circle cx="15.500" cy="16" r="5" fill="#fd9a02" stroke="none" />
  </Icon>
);

const Wifi = () => (
  <Icon w={20} h={15} sw={1.500}>
    <path d="M.7 5.500a13.200 13.200 0 0 1 18.600 0M3.600 8.200a9 9 0 0 1 12.800 0M6.500 11a5 5 0 0 1 7 0" />
    <circle cx="10" cy="13" r="1.200" fill="#1b1b1b" />
  </Icon>
);

const Volume = () => (
  <Icon w={20} h={16} sw={1.300}>
    <path d="M.8 5.500h3L8 1.300v13.400L3.800 10.500h-3zM11 5.500q1.800 2.500 0 5M13.800 3.300q3.600 4.700 0 9.400M16.500 1q5.400 7 0 14" />
  </Icon>
);

const Battery = () => (
  <Icon w={20} h={13} sw={1.500}>
    <rect x=".8" y=".8" width="16" height="11.400" rx="2.500" />
    <path d="M18.800 4.800v3.400" strokeWidth="2" />
    <path d="M4 4v5" strokeWidth="2.500" />
  </Icon>
);

const Bell = () => (
  <Icon w={17} h={19} color="none" fill="#164c5a">
    <path d="M8.500 0a6.500 6.500 0 0 1 6.500 6.500V11l2 3.200q.3.800-.6.800H.6q-.9 0-.6-.8L2 11V6.500A6.500 6.500 0 0 1 8.500 0zM5.500 16h6q-.5 2.500-3 2.500t-3-2.500z" />
  </Icon>
);

/* ---------- content ---------- */

const tabs = [
  ["Bootstrap", true], ["Advanced", true], ["Advanced", true], ["Calculator", true],
  ["Advanced", true], ["Advanced", true], ["Calculator", true], ["Advanced", false],
  ["Calculator", false], ["Advanced", false], ["Advanced", false], ["Advanced", false],
];

const keys = [
  ["C", "top"], ["log", "top"], ["âŒ«", "top"], ["âˆš", "op"],
  ["7", "num"], ["8", "num"], ["9", "num"], ["/", "op"],
  ["4", "num"], ["5", "num"], ["6", "num"], ["*", "op"],
  ["1", "num"], ["2", "num"], ["3", "num"], ["-", "op"],
  [".", "num"], ["0", "num"], ["=", "eq"], ["+", "op"],
];

const LApp = () => <LTile>L</LTile>;

const apps = [
  [TaskView], [ChatApp], [Anaconda], [Explorer, "open"], [Store], [LApp],
  [HexApp], [Chrome, "open"], [Notepad, "open"], [Edge, "active"], [Whatsapp, "open"], [VsCode, "open"],
];

export default function App() {
  const last = tabs.length - 1;
  return (
    <Screen>
      <GlobalStyle />
      <TabStrip>
        <StripStart>
          <SignIn><Avatar />Sign in</SignIn>
          <StripIcon $gap={22}><Workspaces /></StripIcon>
          <StripIcon $gap={33}><TabActions /></StripIcon>
        </StripStart>
        {tabs.map(([title, dim], i) => (
          <Tab key={i} $w={i === 0 ? 120 : 118.85} $active={i === last}>
            <TabDivider $hidden={i === last} />
            <FileIcon dim={dim} />
            <TabTitle>{title}</TabTitle>
            <Cross />
          </Tab>
        ))}
        <WindowControls>
          <ControlSlot $w={17}><Plus /></ControlSlot>
          <ControlSlot $w={57} $ml={62}><Minimize /></ControlSlot>
          <ControlSlot $w={57}><Restore /></ControlSlot>
          <ControlSlot $w={58}><Cross s={13} sw={1.2} /></ControlSlot>
        </WindowControls>
      </TabStrip>

      <Toolbar>
        <ToolSlot $w={70}><Back /></ToolSlot>
        <ToolSlot $w={41}><Refresh /></ToolSlot>
        <AddressBar>
          <Info />
          <Url><b>127.0.0.1</b>:8000/static/calc.html</Url>
          <ToolSlot $w={49}><ReadAloud /></ToolSlot>
          <ToolSlot $w={50}><Star /></ToolSlot>
        </AddressBar>
        <ToolSlot><SplitScreen /></ToolSlot>
        <ToolSlot><Favorites /></ToolSlot>
        <ToolSlot><Collections /></ToolSlot>
        <ToolSlot><Health /></ToolSlot>
        <ToolSlot><Dots /></ToolSlot>
        <ToolSlot $w={51}><Copilot /></ToolSlot>
      </Toolbar>

      <Middle>
        <Page>
          <Heading $top={28}>ATCHAYA CALCULATOR</Heading>
          <Heading $top={28}>Register no: 212223220011</Heading>
          <Calculator>
            <Display>48</Display>
            <Keypad>
              {keys.map(([label, kind]) => <Key key={label} $kind={kind}>{label}</Key>)}
            </Keypad>
          </Calculator>
        </Page>
        <Sidebar>
          <SideSlot $h={52}><SearchTool /></SideSlot>
          <SideSlot><TagTool /></SideSlot>
          <SideSlot><ToolboxTool /></SideSlot>
          <SideSlot><ChessTool /></SideSlot>
          <SideSlot><Office /></SideSlot>
          <SideSlot><Outlook /></SideSlot>
          <SideSlot><PlaneTool /></SideSlot>
          <SideSlot $h={16} />
          <SideRule />
          <SideSlot $h={77}><Plus s={15} color="#444" /></SideSlot>
          <Spacer />
          <SideRule />
          <SideSlot $h={55}><PanelIcon /></SideSlot>
          <SideSlot $h={46}><Gear /></SideSlot>
        </Sidebar>
      </Middle>

      <Taskbar>
        <Weather>
          <WeatherIcon><WeatherArt /></WeatherIcon>
          <Stack><span>28°C</span><Muted>Haze</Muted></Stack>
        </Weather>
        <ToolSlot $w={56}><StartLogo /></ToolSlot>
        <SearchBox>
          <SearchGlass />
          <SearchLabel>Search</SearchLabel>
          <Beach />
        </SearchBox>
        {apps.map(([Art, state], i) => (
          <AppSlot key={i}>
            <AppTile $active={state === "active"}>
              <Art />
              {state && <Indicator $active={state === "active"} />}
            </AppTile>
          </AppSlot>
        ))}
        <Tray>
          <TraySlot $w={40}><Chevron /></TraySlot>
          <TraySlot $w={40}><Sync /></TraySlot>
          <TraySlot $w={56}>
            <Stack $align="center"><span>ENG</span><span>IN</span></Stack>
          </TraySlot>
          <TraySlot $w={38}><Wifi /></TraySlot>
          <TraySlot $w={22}><Volume /></TraySlot>
          <TraySlot $w={38}><Battery /></TraySlot>
          <TraySlot $w={89} $end>
            <Stack $align="flex-end" $track={-0.1}><span>16:23</span><span>23-12-2023</span></Stack>
          </TraySlot>
          <TraySlot $w={38}><Bell /></TraySlot>
        </Tray>
      </Taskbar>
    </Screen>
  );
}
